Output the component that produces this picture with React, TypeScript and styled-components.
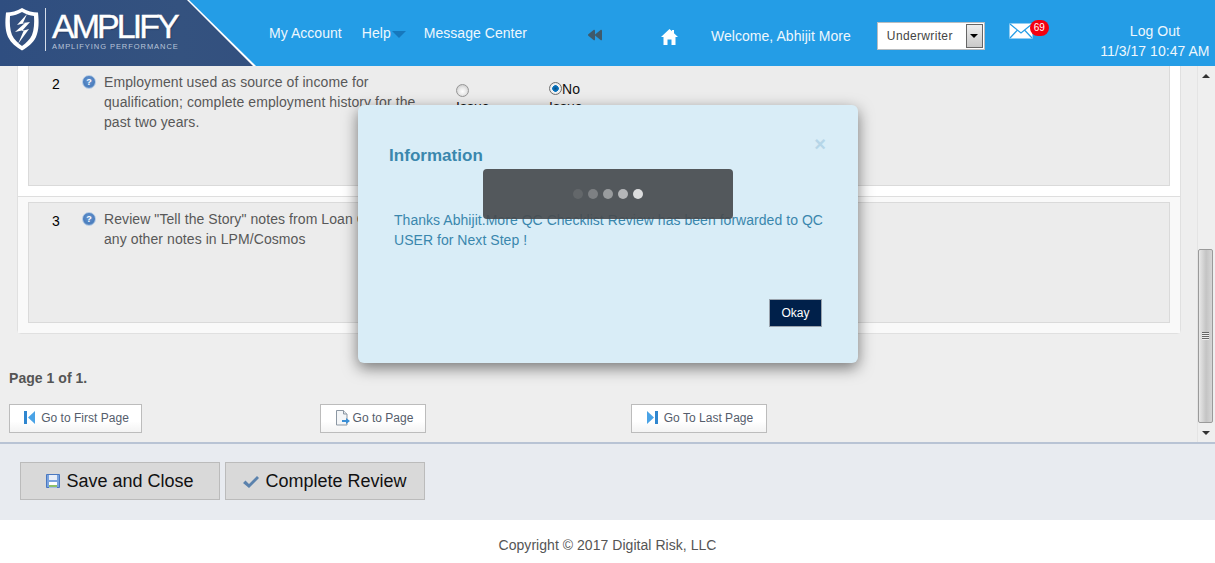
import React from 'react';
import styled, { createGlobalStyle } from 'styled-components';
import { FaBackward } from 'react-icons/fa';

const Global = createGlobalStyle`
  html, body { margin: 0; padding: 0; height: 100%; overflow: hidden; background: #fff; }
  body { font-family: "Liberation Sans", Arial, sans-serif; font-size: 14px; letter-spacing: .04px; }
  * { box-sizing: border-box; }
`;

const Page = styled.div`
  position: relative;
  display: flex;
  flex-direction: column;
  width: 1215px;
  height: 563px;
  overflow: hidden;
`;

/* ---------- header ---------- */
const Header = styled.header`
  display: flex;
  align-items: flex-start;
  height: 66px;
  flex: none;
  background: #249de6;
  color: #eef7fd;
  font-size: 14px;
`;
const LogoPanel = styled.div`
  position: relative;
  flex: none;
  width: 256px;
  height: 66px;
  display: flex;
  padding: 8px 0 0 5px;
  &::before {
    content: '';
    position: absolute;
    inset: 0;
    background: #fff;
    clip-path: polygon(0 0, 189px 0, 256px 66px, 0 66px);
  }
  &::after {
    content: '';
    position: absolute;
    inset: 0;
    background: linear-gradient(90deg, #2f4e80, #34527f 70%, #33507f);
    clip-path: polygon(0 0, 187px 0, 253px 66px, 0 66px);
  }
`;
const LogoContent = styled.div`
  position: relative;
  z-index: 1;
  display: flex;
  align-items: flex-start;
`;
const LogoDivider = styled.div`
  width: 1px;
  height: 43px;
  margin: 0 6px 0 6px;
  background: #d6deea;
`;
const LogoWords = styled.div`
  display: flex;
  flex-direction: column;
`;
const LogoName = styled.div`
  margin-top: 2px;
  font-size: 34px;
  line-height: 32px;
  letter-spacing: -2.95px;
  color: #fff;
  white-space: nowrap;
  -webkit-text-stroke: .4px #fff;
  text-shadow: 1px 1px 1px rgba(20, 35, 70, .5);
`;
const LogoTag = styled.div`
  margin-top: 0;
  font-size: 7.5px;
  line-height: 9px;
  letter-spacing: .95px;
  color: #b9c5d9;
  white-space: nowrap;
`;
const NavLink = styled.span<{ $left: number; $top: number }>`
  flex: none;
  margin-left: ${p => p.$left}px;
  margin-top: ${p => p.$top}px;
  line-height: 20px;
  white-space: nowrap;
  display: inline-flex;
  align-items: center;
`;
const Caret = styled.span`
  width: 0;
  height: 0;
  margin: 3px 0 0 1px;
  border-left: 7px solid transparent;
  border-right: 7px solid transparent;
  border-top: 7px solid #1678bd;
`;
const IconSlot = styled.span<{ $left: number; $top: number; $color: string }>`
  flex: none;
  display: flex;
  margin-left: ${p => p.$left}px;
  margin-top: ${p => p.$top}px;
  color: ${p => p.$color};
`;
const RoleSelect = styled.div`
  flex: none;
  display: flex;
  width: 108px;
  height: 28px;
  margin: 22px 0 0 26px;
  background: #fff;
  border: 1px solid #b9bdc0;
`;
const RoleText = styled.span`
  flex: 1;
  padding-left: 9px;
  font-size: 12px;
  line-height: 27px;
  letter-spacing: .35px;
  color: #444;
`;
const RoleArrow = styled.span`
  width: 17px;
  margin: 1px;
  border: 1px solid #666;
  background: linear-gradient(180deg, #eee, #c9c9c9);
  display: flex;
  align-items: center;
  justify-content: center;
  &::after {
    content: '';
    border-left: 4px solid transparent;
    border-right: 4px solid transparent;
    border-top: 4px solid #000;
  }
`;
const MailWrap = styled.span`
  position: relative;
  flex: none;
  width: 24px;
  height: 16px;
  margin: 23px 0 0 24px;
  display: flex;
`;
const Badge = styled.span`
  position: absolute;
  left: 21px;
  top: -3px;
  width: 19px;
  height: 16px;
  border-radius: 8px;
  background: #f4000f;
  color: #fff;
  font-size: 10px;
  line-height: 16px;
  text-align: center;
`;
const LogoutBlock = styled.div`
  flex: none;
  margin: 21px 0 0 67px;
  width: 110px;
  text-align: center;
  line-height: 20px;
  white-space: nowrap;
`;

/* ---------- main ---------- */
const Main = styled.main`
  display: flex;
  height: 376px;
  flex: none;
  background: #eeeeee;
  overflow: hidden;
`;
const Content = styled.div`
  flex: 1;
  min-width: 0;
  padding-left: 9px;
`;
const Card = styled.div`
  width: 1164px;
  margin: -7px 0 0 8px;
  background: #fff;
  border: 1px solid #e0e0e0;
  border-radius: 0 0 4px 4px;
`;
const Row = styled.div<{ $alt?: boolean }>`
  padding: 5px 10px 10px;
  background: ${p => (p.$alt ? '#f9f9f9' : '#fff')};
  & + & { border-top: 1px solid #dedede; }
`;
const RowBox = styled.div`
  display: grid;
  grid-template-columns: 53px 22px 352px 93px 60px;
  height: 121px;
  padding-top: 6px;
  background: #ececec;
  border: 1px solid #dadada;
`;
const RowNumber = styled.div`
  padding-left: 23px;
  padding-top: 2px;
  line-height: 20px;
  color: #000;
`;
const Help = styled.span`
  display: block;
  width: 14px;
  height: 14px;
  margin-top: 3px;
  border-radius: 50%;
  border: 1px solid #b4cbe6;
  background: radial-gradient(circle at 50% 40%, #6a98d2, #4a7dbd 60%, #8eb0d8);
  color: #fff;
  font-size: 9px;
  font-weight: bold;
  line-height: 12px;
  text-align: center;
`;
const RowText = styled.div`
  width: 322px;
  line-height: 20px;
  letter-spacing: .08px;
  color: #585858;
`;
const RadioLabel = styled.label`
  display: block;
  width: 40px;
  margin-top: 8px;
  line-height: 18px;
  color: #111;
`;
const Radio = styled.span<{ $on?: boolean }>`
  display: inline-block;
  width: 13px;
  height: 13px;
  vertical-align: ${p => (p.$on ? '-1px' : '-3px')};
  border-radius: 50%;
  border: 1px solid ${p => (p.$on ? '#707070' : '#969696')};
  background: ${p =>
    p.$on
      ? 'radial-gradient(circle, #0b4f86 0, #0a78c4 3px, #f4f4f4 3.6px, #dcdcdc 100%)'
      : 'radial-gradient(circle at 50% 60%, #fff 0, #e8e8e8 45%, #bdbdbd 100%)'};
`;
const PageInfo = styled.div`
  margin-top: 36px;
  font-weight: bold;
  line-height: 16px;
  color: #555;
`;
const Pager = styled.div`
  display: grid;
  grid-template-columns: repeat(3, 311px);
  margin-top: 18px;
  justify-items: start;
`;
const PagerButton = styled.button<{ $width: number; $gap: number }>`
  display: flex;
  align-items: center;
  justify-content: center;
  gap: ${p => p.$gap}px;
  width: ${p => p.$width}px;
  height: 29px;
  padding: 0 0 2px 2px;
  border: 1px solid #bcbcbc;
  background: linear-gradient(180deg, #fff 60%, #f3f3f3);
  font: 12px "Liberation Sans", Arial, sans-serif;
  letter-spacing: .02px;
  color: #555d6b;
`;

/* ---------- scrollbar (drawn as in the page's browser) ---------- */
const ScrollTrack = styled.div`
  flex: none;
  width: 18px;
  padding-right: 2px;
  display: flex;
  flex-direction: column;
  align-items: center;
  border-left: 1px solid #e4e4e4;
  background: #efefef;
`;
const ScrollArrow = styled.span<{ $down?: boolean }>`
  flex: none;
  width: 0;
  height: 0;
  border-left: 4px solid transparent;
  border-right: 4px solid transparent;
  ${p => (p.$down ? 'border-top: 4px solid #333; margin-top: 8px;' : 'border-bottom: 4px solid #333; margin-top: 8px;')}
`;
const ScrollGap = styled.div`
  flex: none;
  height: 171px;
`;
const ScrollThumb = styled.div`
  flex: none;
  width: 15px;
  height: 174px;
  border: 1px solid #9a9a9a;
  border-radius: 2px;
  background: linear-gradient(90deg, #e8e8e8, #c4c4c4 55%, #d6d6d6);
  display: flex;
  align-items: center;
  justify-content: center;
`;
const ScrollGrip = styled.span`
  width: 7px;
  height: 8px;
  background: repeating-linear-gradient(180deg, #666 0 1px, #eee 1px 2px);
`;

/* ---------- action bar / footer ---------- */
const ActionBar = styled.div`
  display: flex;
  gap: 5px;
  height: 78px;
  flex: none;
  padding: 18px 0 0 20px;
  background: #e8ebf0;
  border-top: 2px solid #b8c3d4;
`;
const ActionButton = styled.button`
  display: flex;
  align-items: center;
  justify-content: center;
  gap: 6px;
  width: 200px;
  height: 38px;
  padding: 0;
  background: #d9d9d9;
  border: 1px solid #bbbbbb;
  font: 18px "Liberation Sans", Arial, sans-serif;
  color: #111;
`;
const Footer = styled.footer`
  flex: 1;
  padding-top: 16px;
  background: #fff;
  text-align: center;
  line-height: 18px;
  color: #555;
`;

/* ---------- modal ---------- */
const Modal = styled.div`
  position: absolute;
  left: 358px;
  top: 105px;
  width: 500px;
  height: 258px;
  padding: 41px 36px 0 31px;
  background: #d9edf7;
  border-radius: 6px;
  box-shadow: 0 5px 15px rgba(0, 0, 0, .5);
  color: #3a87ad;
`;
const ModalClose = styled.span`
  position: absolute;
  right: 32px;
  top: 29px;
  font-size: 20px;
  font-weight: bold;
  line-height: 20px;
  color: #b6d6e8;
`;
const ModalTitle = styled.h3`
  margin: 0;
  font-size: 17px;
  line-height: 20px;
  font-weight: bold;
  color: #3a87ad;
`;
const ModalBody = styled.p`
  margin: 44px -8px 0 5px;
  line-height: 20px;
`;
const ModalActions = styled.div`
  display: flex;
  justify-content: flex-end;
  margin-top: 49px;
`;
const OkayButton = styled.button`
  width: 53px;
  height: 28px;
  padding: 0;
  background: #00204a;
  border: 1px solid #9aa3ad;
  color: #fff;
  font: 12px "Liberation Sans", Arial, sans-serif;
`;
const Loader = styled.div`
  position: absolute;
  left: 483px;
  top: 169px;
  width: 250px;
  height: 50px;
  display: flex;
  align-items: center;
  justify-content: center;
  gap: 5px;
  border-radius: 4px;
  background: rgba(72, 75, 78, .92);
`;
const Dot = styled.span<{ $shade: string }>`
  width: 10px;
  height: 10px;
  border-radius: 50%;
  background: ${p => p.$shade};
`;

/* ---------- drawings ---------- */
const Shield = () => (
  <svg width="34" height="43" viewBox="0 0 34 43">
    <path d="M17 0 C12 3 6 4.5 1 4.5 C0 14 0 22 3 29 C6 35 11 39 17 42.5 C23 39 28 35 31 29 C34 22 34 14 33 4.5 C28 4.5 22 3 17 0 Z" fill="#fff" />
    <path d="M17 4 C13 6.5 9 7.5 5 8 C4.5 15 5 22 7 27 C9 31.5 13 35 17 38 C21 35 25 31.5 27 27 C29 22 29.5 15 29 8 C25 7.5 21 6.5 17 4 Z" fill="#33507f" />
    <path d="M22 6 L12 17 L20 15 L10 24 L19 22 L13 36 L24 21 L17 23 L25 14 L18 15 Z" fill="#fff" />
  </svg>
);
const Home = () => (
  <svg width="17" height="16" viewBox="0 0 17 16">
    <path d="M8.5 0 L11 2.3 V1 H13 V4.2 L17 8 H14.5 V16 H10.5 V10.5 H6.5 V16 H2.5 V8 H0 Z" fill="#fff" />
  </svg>
);
const Mail = () => (
  <svg width="24" height="16" viewBox="0 0 24 16">
    <rect x="0.5" y="0.5" width="23" height="15" fill="#fff" />
    <path d="M1 1 L12 10 L23 1 M1 15 L8.5 7 M23 15 L15.5 7" fill="none" stroke="#249de6" strokeWidth="1.2" />
  </svg>
);
const FirstIcon = () => (
  <svg width="11" height="13" viewBox="0 0 11 13">
    <rect x="0" y="0" width="3" height="13" fill="#2f86cf" />
    <path d="M11 0 L4 6.5 L11 13 Z" fill="#4aa3e6" />
  </svg>
);
const LastIcon = () => (
  <svg width="11" height="13" viewBox="0 0 11 13">
    <rect x="8" y="0" width="3" height="13" fill="#2f86cf" />
    <path d="M0 0 L7 6.5 L0 13 Z" fill="#4aa3e6" />
  </svg>
);
const DocIcon = () => (
  <svg width="15" height="16" viewBox="0 0 15 16">
    <path d="M1.5 .5 H8.5 L12 4 V15 H1.5 Z" fill="#f4f6f8" stroke="#8c97a3" />
    <path d="M8.5 .5 V4 H12" fill="#dfe5ea" stroke="#8c97a3" />
    <path d="M7 10 H11 V8 L15 11 L11 14 V12 H7 Z" fill="#3a8fd6" />
  </svg>
);
const SaveIcon = () => (
  <svg width="14" height="14" viewBox="0 0 14 14">
    <path d="M.5 .5 H13.5 V13.5 H.5 Z" fill="#7aa3de" stroke="#4a78c0" />
    <rect x="3" y="1" width="8" height="5" fill="#e8eef8" />
    <rect x="3" y="8" width="8" height="5.5" fill="#fff" />
    <rect x="3" y="11" width="8" height="2" fill="#8cc06a" />
  </svg>
);
const CheckIcon = () => (
  <svg width="16" height="13" viewBox="0 0 16 13">
    <path d="M0 8 L2.5 5.5 L6 9 L14 1 L16 3 L6 13 Z" fill="#5b82ad" />
  </svg>
);

const App = () => (
  <Page>
    <Global />
    <Header>
      <LogoPanel>
        <LogoContent>
          <Shield />
          <LogoDivider />
          <LogoWords>
            <LogoName>AMPLIFY</LogoName>
            <LogoTag>AMPLIFYING PERFORMANCE</LogoTag>
          </LogoWords>
        </LogoContent>
      </LogoPanel>
      <NavLink $left={13} $top={23}>My Account</NavLink>
      <NavLink $left={20} $top={23}>Help<Caret /></NavLink>
      <NavLink $left={18} $top={23}>Message Center</NavLink>
      <IconSlot $left={61} $top={28} $color="#3f5a6b"><FaBackward size={14} /></IconSlot>
      <IconSlot $left={59} $top={29} $color="#fff"><Home /></IconSlot>
      <NavLink $left={33} $top={26}>Welcome, Abhijit More</NavLink>
      <RoleSelect>
        <RoleText>Underwriter</RoleText>
        <RoleArrow />
      </RoleSelect>
      <MailWrap>
        <Mail />
        <Badge>69</Badge>
      </MailWrap>
      <LogoutBlock>
        Log Out
        <br />
        11/3/17 10:47 AM
      </LogoutBlock>
    </Header>

    <Main>
      <Content>
        <Card>
          <Row>
            <RowBox>
              <RowNumber>2</RowNumber>
              <Help>?</Help>
              <RowText>Employment used as source of income for qualification; complete employment history for the past two years.</RowText>
              <RadioLabel><Radio /> Issue</RadioLabel>
              <RadioLabel><Radio $on />No Issue</RadioLabel>
            </RowBox>
          </Row>
          <Row $alt>
            <RowBox>
              <RowNumber>3</RowNumber>
              <Help>?</Help>
              <RowText>Review "Tell the Story" notes from Loan Officer, any other notes in LPM/Cosmos</RowText>
            </RowBox>
          </Row>
        </Card>
        <PageInfo>Page 1 of 1.</PageInfo>
        <Pager>
          <PagerButton $width={133} $gap={6}><FirstIcon />Go to First Page</PagerButton>
          <PagerButton $width={106} $gap={3}><DocIcon />Go to Page</PagerButton>
          <PagerButton $width={136} $gap={6}><LastIcon />Go To Last Page</PagerButton>
        </Pager>
      </Content>
      <ScrollTrack>
        <ScrollArrow />
        <ScrollGap />
        <ScrollThumb><ScrollGrip /></ScrollThumb>
        <ScrollArrow $down />
      </ScrollTrack>
    </Main>

    <ActionBar>
      <ActionButton><SaveIcon />Save and Close</ActionButton>
      <ActionButton><CheckIcon />Complete Review</ActionButton>
    </ActionBar>
    <Footer>Copyright © 2017 Digital Risk, LLC</Footer>

    <Modal>
      <ModalClose>×</ModalClose>
      <ModalTitle>Information</ModalTitle>
      <ModalBody>Thanks Abhijit.More QC Checklist Review has been forwarded to QC USER for Next Step !</ModalBody>
      <ModalActions><OkayButton>Okay</OkayButton></ModalActions>
    </Modal>
    <Loader>
      <Dot $shade="#63676a" />
      <Dot $shade="#7d8083" />
      <Dot $shade="#999c9e" />
      <Dot $shade="#b4b6b8" />
      <Dot $shade="#dcddde" />
    </Loader>
  </Page>
);

export default App;
